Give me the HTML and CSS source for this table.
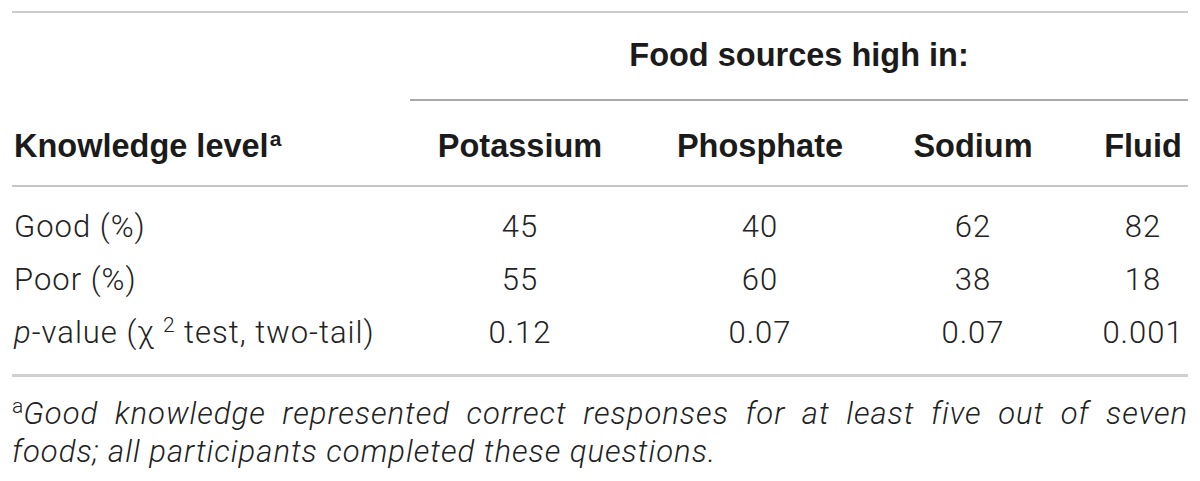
FILE: index.html
```html
<!DOCTYPE html>
<html lang="en">
<head>
  <meta charset="UTF-8" />
  <meta name="viewport" content="width=device-width, initial-scale=1.0"/>
  <title>Knowledge of food sources</title>
  <link rel="stylesheet" href="styles.css">
</head>
<body>
  <div class="wrap">
    <table class="data">
      <colgroup>
        <col class="c-label">
        <col class="c-pot">
        <col class="c-pho">
        <col class="c-sod">
        <col class="c-flu">
      </colgroup>
      <thead>
        <tr class="group-row">
          <th></th>
          <th colspan="4" class="group">Food sources high in:</th>
        </tr>
        <tr class="head-row">
          <th class="label">Knowledge level<sup>a</sup></th>
          <th>Potassium</th>
          <th>Phosphate</th>
          <th>Sodium</th>
          <th class="last">Fluid</th>
        </tr>
      </thead>
      <tbody>
        <tr>
          <td class="label">Good (%)</td>
          <td>45</td>
          <td>40</td>
          <td>62</td>
          <td class="last">82</td>
        </tr>
        <tr>
          <td class="label">Poor (%)</td>
          <td>55</td>
          <td>60</td>
          <td>38</td>
          <td class="last">18</td>
        </tr>
        <tr>
          <td class="label"><i>p</i>-value (&chi;<sup class="sq">2</sup> test, two-tail)</td>
          <td>0.12</td>
          <td>0.07</td>
          <td>0.07</td>
          <td class="last">0.001</td>
        </tr>
      </tbody>
    </table>

    <div class="note">
      <span class="note-first"><sup>a</sup><em>Good knowledge represented correct responses for at least five out of seven</em></span>
      <span class="note-rest"><em>foods; all participants completed these questions.</em></span>
    </div>
  </div>
</body>
</html>
```

FILE: styles.css
```css
* {
  box-sizing: border-box;
}

html, body {
  margin: 0;
  padding: 0;
  background: #fff;
}

body {
  font-family: Roboto, "Liberation Sans", sans-serif;
  font-weight: 300;
  font-size: 31px;
  letter-spacing: 1px;
  color: #222;
}

.wrap {
  padding: 11px 12px 0;
}

.data {
  width: 100%;
  border-collapse: separate;
  border-spacing: 0;
  table-layout: fixed;
}

.c-label { width: 398px; }
.c-pot { width: 220px; }
.c-pho { width: 260px; }
.c-sod { width: 166px; }
.c-flu { width: 132px; }

th, td {
  line-height: 34px;
  text-align: center;
  padding: 0;
  white-space: nowrap;
}

th {
  font-family: "Liberation Sans", Arial, sans-serif;
  font-weight: 700;
  font-size: 32.5px;
  letter-spacing: 0;
  color: #1b1b1b;
}

.label {
  text-align: left;
  padding-left: 2px;
}

.last {
  padding-left: 42px;
}

.group-row th {
  border-top: 2px solid #cbcbcb;
  padding: 25px 0 27px;
}

.group-row .group {
  border-bottom: 2px solid #a9a9a9;
  padding-left: 0;
}

.head-row th {
  padding-top: 28px;
  padding-bottom: 22px;
  border-bottom: 2px solid #c4c4c4;
}

.head-row .label {
  padding-left: 2px;
}

.head-row .last {
  padding-left: 42px;
}

th sup {
  font-size: 21px;
  line-height: 0;
  vertical-align: 11px;
  margin-left: 1px;
}

td {
  padding-top: 10px;
  padding-bottom: 9px;
}

tbody tr:first-child td {
  padding-top: 23px;
}

tbody tr:last-child td {
  padding-bottom: 24px;
  border-bottom: 3px solid #d0d0d0;
}

td .sq {
  font-size: 21px;
  line-height: 0;
  vertical-align: 11px;
  margin-left: 8px;
}

.note {
  margin-top: 18px;
  line-height: 38px;
  color: #222;
}

.note span {
  display: block;
}

.note-first {
  text-align: justify;
  text-align-last: justify;
}

.note sup {
  font-size: 21px;
  line-height: 0;
  vertical-align: 11px;
  letter-spacing: 0;
}

.note em {
  font-style: italic;
}
```
